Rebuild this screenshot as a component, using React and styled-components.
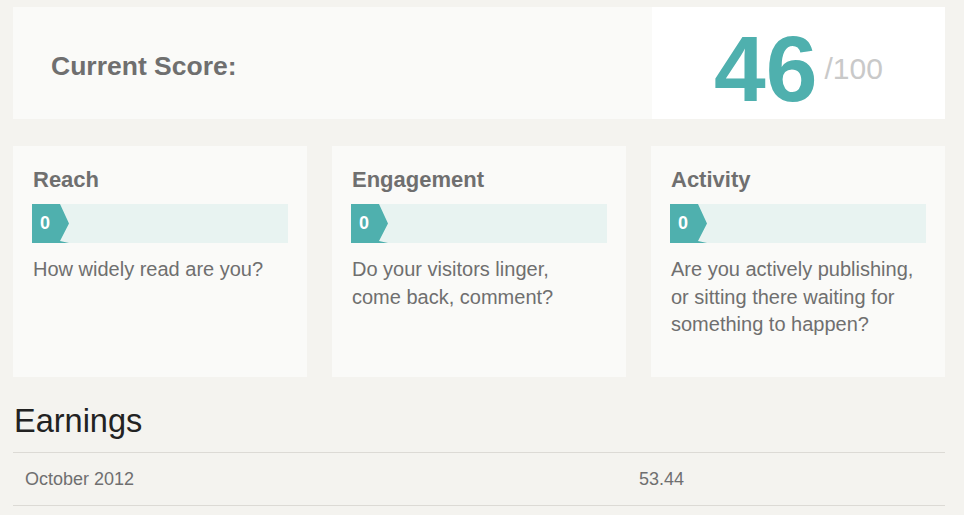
import React from "react";
import styled, { createGlobalStyle } from "styled-components";

const Global = createGlobalStyle`
  html, body { margin: 0; padding: 0; background: #f4f3ef; }
  body { font-family: "Liberation Sans", Arial, sans-serif; }
`;

const Page = styled.div`
  padding: 7px 19px 0 13px;
`;

const ScorePanel = styled.section`
  display: grid;
  grid-template-columns: 1fr 293px;
  height: 112px;
  background: #fafaf8;
`;

const ScoreLabel = styled.h2`
  margin: 0;
  display: flex;
  align-items: center;
  padding: 6px 0 0 38px;
  font-size: 26.5px;
  font-weight: 700;
  color: #6f6f6f;
`;

const ScoreBox = styled.div`
  background: #ffffff;
  display: flex;
  align-items: center;
  justify-content: center;
  padding-top: 12px;
  box-sizing: border-box;
`;

const ScoreValue = styled.span`
  font-size: 93px;
  line-height: 93px;
  font-weight: 700;
  color: #4fb0ae;
`;

const ScoreMax = styled.span`
  font-size: 30px;
  line-height: 30px;
  color: #c9c9c9;
  margin-left: 7px;
`;

const Cards = styled.div`
  display: grid;
  grid-template-columns: repeat(3, 1fr);
  gap: 25px;
  margin-top: 27px;
`;

const Card = styled.article`
  background: #fafaf8;
  min-height: 231px;
  padding: 21px 19px 0 19px;
  box-sizing: border-box;
`;

const CardTitle = styled.h3`
  margin: 0 0 11px 1px;
  font-size: 22px;
  line-height: 26px;
  font-weight: 700;
  color: #6f6f6f;
`;

const Bar = styled.div`
  height: 39px;
  background: #e8f3f1;
  display: flex;
`;

const Badge = styled.div`
  width: 37px;
  height: 39px;
  background: #4fb0ae;
  clip-path: polygon(0 0, 28px 0, 37px 19.5px, 28px 37px, 37px 39px, 0 39px);
  color: #ffffff;
  font-weight: 700;
  font-size: 18px;
  line-height: 39px;
  padding-left: 8px;
  box-sizing: border-box;
`;

const Desc = styled.p`
  margin: 13px 0 0 1px;
  max-width: 249px;
  font-size: 20px;
  line-height: 27.5px;
  color: #6f6f6f;
`;

const Heading = styled.h2`
  margin: 24px 0 11px 1px;
  font-size: 32.5px;
  line-height: 40px;
  font-weight: 400;
  color: #222222;
`;

const Table = styled.div`
  border-top: 1px solid #dcdad5;
`;

const Row = styled.div`
  display: grid;
  grid-template-columns: 626px 1fr;
  height: 52px;
  align-items: center;
  border-bottom: 1px solid #dcdad5;
  font-size: 18px;
  color: #6f6f6f;
`;

const Cell = styled.div`
  padding-left: ${(p) => p.$pad || 0}px;
`;

const metrics = [
  { title: "Reach", value: 0, text: "How widely read are you?" },
  { title: "Engagement", value: 0, text: "Do your visitors linger, come back, comment?" },
  {
    title: "Activity",
    value: 0,
    text: "Are you actively publishing, or sitting there waiting for something to happen?",
  },
];

export default function App() {
  return (
    <>
      <Global />
      <Page>
        <ScorePanel>
          <ScoreLabel>Current Score:</ScoreLabel>
          <ScoreBox>
            <ScoreValue>46</ScoreValue>
            <ScoreMax>/100</ScoreMax>
          </ScoreBox>
        </ScorePanel>
        <Cards>
          {metrics.map((m) => (
            <Card key={m.title}>
              <CardTitle>{m.title}</CardTitle>
              <Bar>
                <Badge>{m.value}</Badge>
              </Bar>
              <Desc>{m.text}</Desc>
            </Card>
          ))}
        </Cards>
        <Heading>Earnings</Heading>
        <Table>
          <Row>
            <Cell $pad={12}>October 2012</Cell>
            <Cell>53.44</Cell>
          </Row>
        </Table>
      </Page>
    </>
  );
}
